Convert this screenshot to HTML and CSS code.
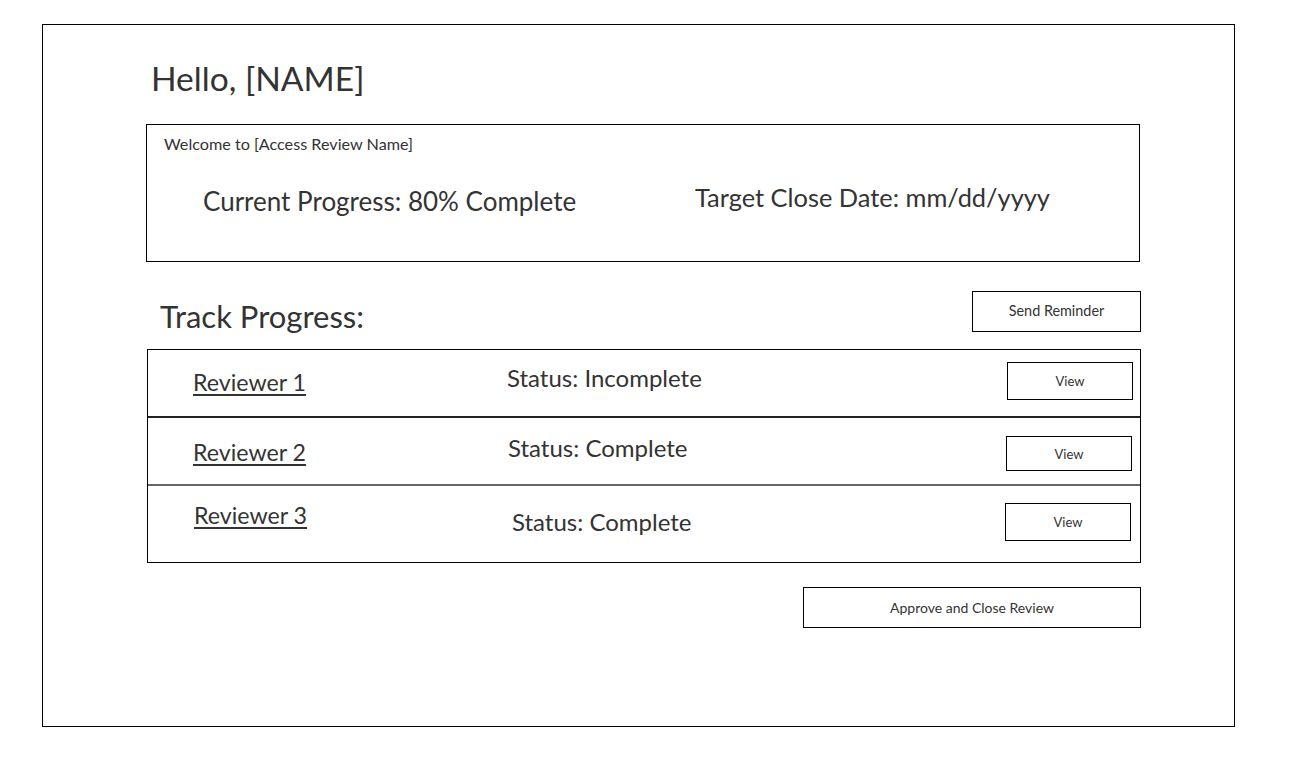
FILE: index.html
```html
<!DOCTYPE html>
<html>
<head>
<meta charset="utf-8">
<title>Access Review</title>
<link rel="stylesheet" href="styles.css">
</head>
<body>
<div class="frame">
  <div class="content">
    <h1 class="hello">Hello, [NAME]</h1>
    <section class="welcome">
      <div class="welcome-title">Welcome to [Access Review Name]</div>
      <div class="welcome-stats">
        <div class="stat stat-progress">Current Progress: 80% Complete</div>
        <div class="stat stat-date">Target Close Date: mm/dd/yyyy</div>
      </div>
    </section>
    <div class="track-head">
      <h2 class="track-title">Track Progress:</h2>
      <button class="btn btn-remind">Send Reminder</button>
    </div>
    <div class="table">
      <div class="row row-1">
        <a class="reviewer" href="#">Reviewer 1</a>
        <span class="status">Status: Incomplete</span>
        <button class="btn btn-view">View</button>
      </div>
      <div class="row row-2">
        <a class="reviewer" href="#">Reviewer 2</a>
        <span class="status">Status: Complete</span>
        <button class="btn btn-view">View</button>
      </div>
      <div class="row row-3">
        <a class="reviewer" href="#">Reviewer 3</a>
        <span class="status">Status: Complete</span>
        <button class="btn btn-view">View</button>
      </div>
    </div>
    <div class="actions">
      <button class="btn btn-approve">Approve and Close Review</button>
    </div>
  </div>
</div>
</body>
</html>
```

FILE: styles.css
```css
* { box-sizing: border-box; }
html, body { margin: 0; padding: 0; background: #fff; }
body {
  font-family: "Lato", "Open Sans", sans-serif;
  color: #333;
}
.frame {
  margin: 24px 0 0 42px;
  width: 1193px;
  height: 703px;
  border: 1px solid #000;
}
.content {
  width: 994px;
  margin-left: 103px;
  display: flex;
  flex-direction: column;
}
.hello {
  margin: 0;
  padding: 28px 0 0 5px;
  height: 99px;
  font-size: 33.6px;
  line-height: 50px;
  font-weight: 400;
}
.welcome {
  width: 994px;
  height: 138px;
  border: 1px solid #000;
  padding: 9px 0 0 17px;
}
.welcome-title {
  font-size: 16.2px;
  line-height: 20px;
}
.welcome-stats {
  display: flex;
  margin-top: 30px;
}
.stat { font-size: 26px; line-height: 34px; }
.stat-progress { margin-left: 39px; width: 492px; }
.stat-date { margin-top: -4px; font-size: 25.4px; }

.track-head {
  display: flex;
  justify-content: space-between;
  align-items: flex-start;
  margin-top: 29px;
  height: 58px;
}
.track-title {
  margin: 8px 0 0 14px;
  font-size: 31px;
  line-height: 34px;
  font-weight: 400;
}
.btn {
  font-family: inherit;
  color: #333;
  background: #fff;
  border: 1px solid #000;
  padding: 0;
  cursor: pointer;
}
.btn-remind {
  width: 169px;
  height: 41px;
  font-size: 14.4px;
  margin-right: -1px;
  padding-bottom: 2px;
}
.table {
  width: 994px;
  margin-left: 1px;
  border: 1px solid #000;
}
.row {
  display: flex;
  align-items: flex-start;
  height: 68px;
}
.row-1 { border-bottom: 2px solid #222; height: 68px; }
.row-2 { border-bottom: 2px solid #666; height: 68px; }
.row-3 { height: 76px; }
.reviewer {
  color: #333;
  font-size: 23.2px;
  line-height: 28px;
  width: 314px;
  margin-left: 45px;
  text-decoration: underline;
  text-underline-offset: 3px;
}
.status {
  font-size: 24px;
  line-height: 30px;
  flex: 1;
}
.btn-view {
  width: 126px;
  height: 38px;
  font-size: 13px;
  margin-right: 7px;
}
.row-1 .reviewer { margin-top: 18px; }
.row-1 .status { margin-top: 13px; }
.row-1 .btn-view { margin-top: 12px; }
.row-2 .reviewer { margin-top: 20px; }
.row-2 .status { margin-top: 15px; margin-left: 1px; }
.row-2 .btn-view { margin-top: 18px; height: 35px; margin-right: 8px; }
.row-3 .reviewer { margin-top: 15px; margin-left: 46px; width: 318px; }
.row-3 .status { margin-top: 21px; }
.row-3 .btn-view { margin-top: 17px; margin-right: 9px; }

.actions {
  display: flex;
  justify-content: flex-end;
  margin-top: 24px;
}
.btn-approve {
  width: 338px;
  height: 41px;
  font-size: 14px;
  margin-right: -1px;
  padding-bottom: 1px;
}
```
